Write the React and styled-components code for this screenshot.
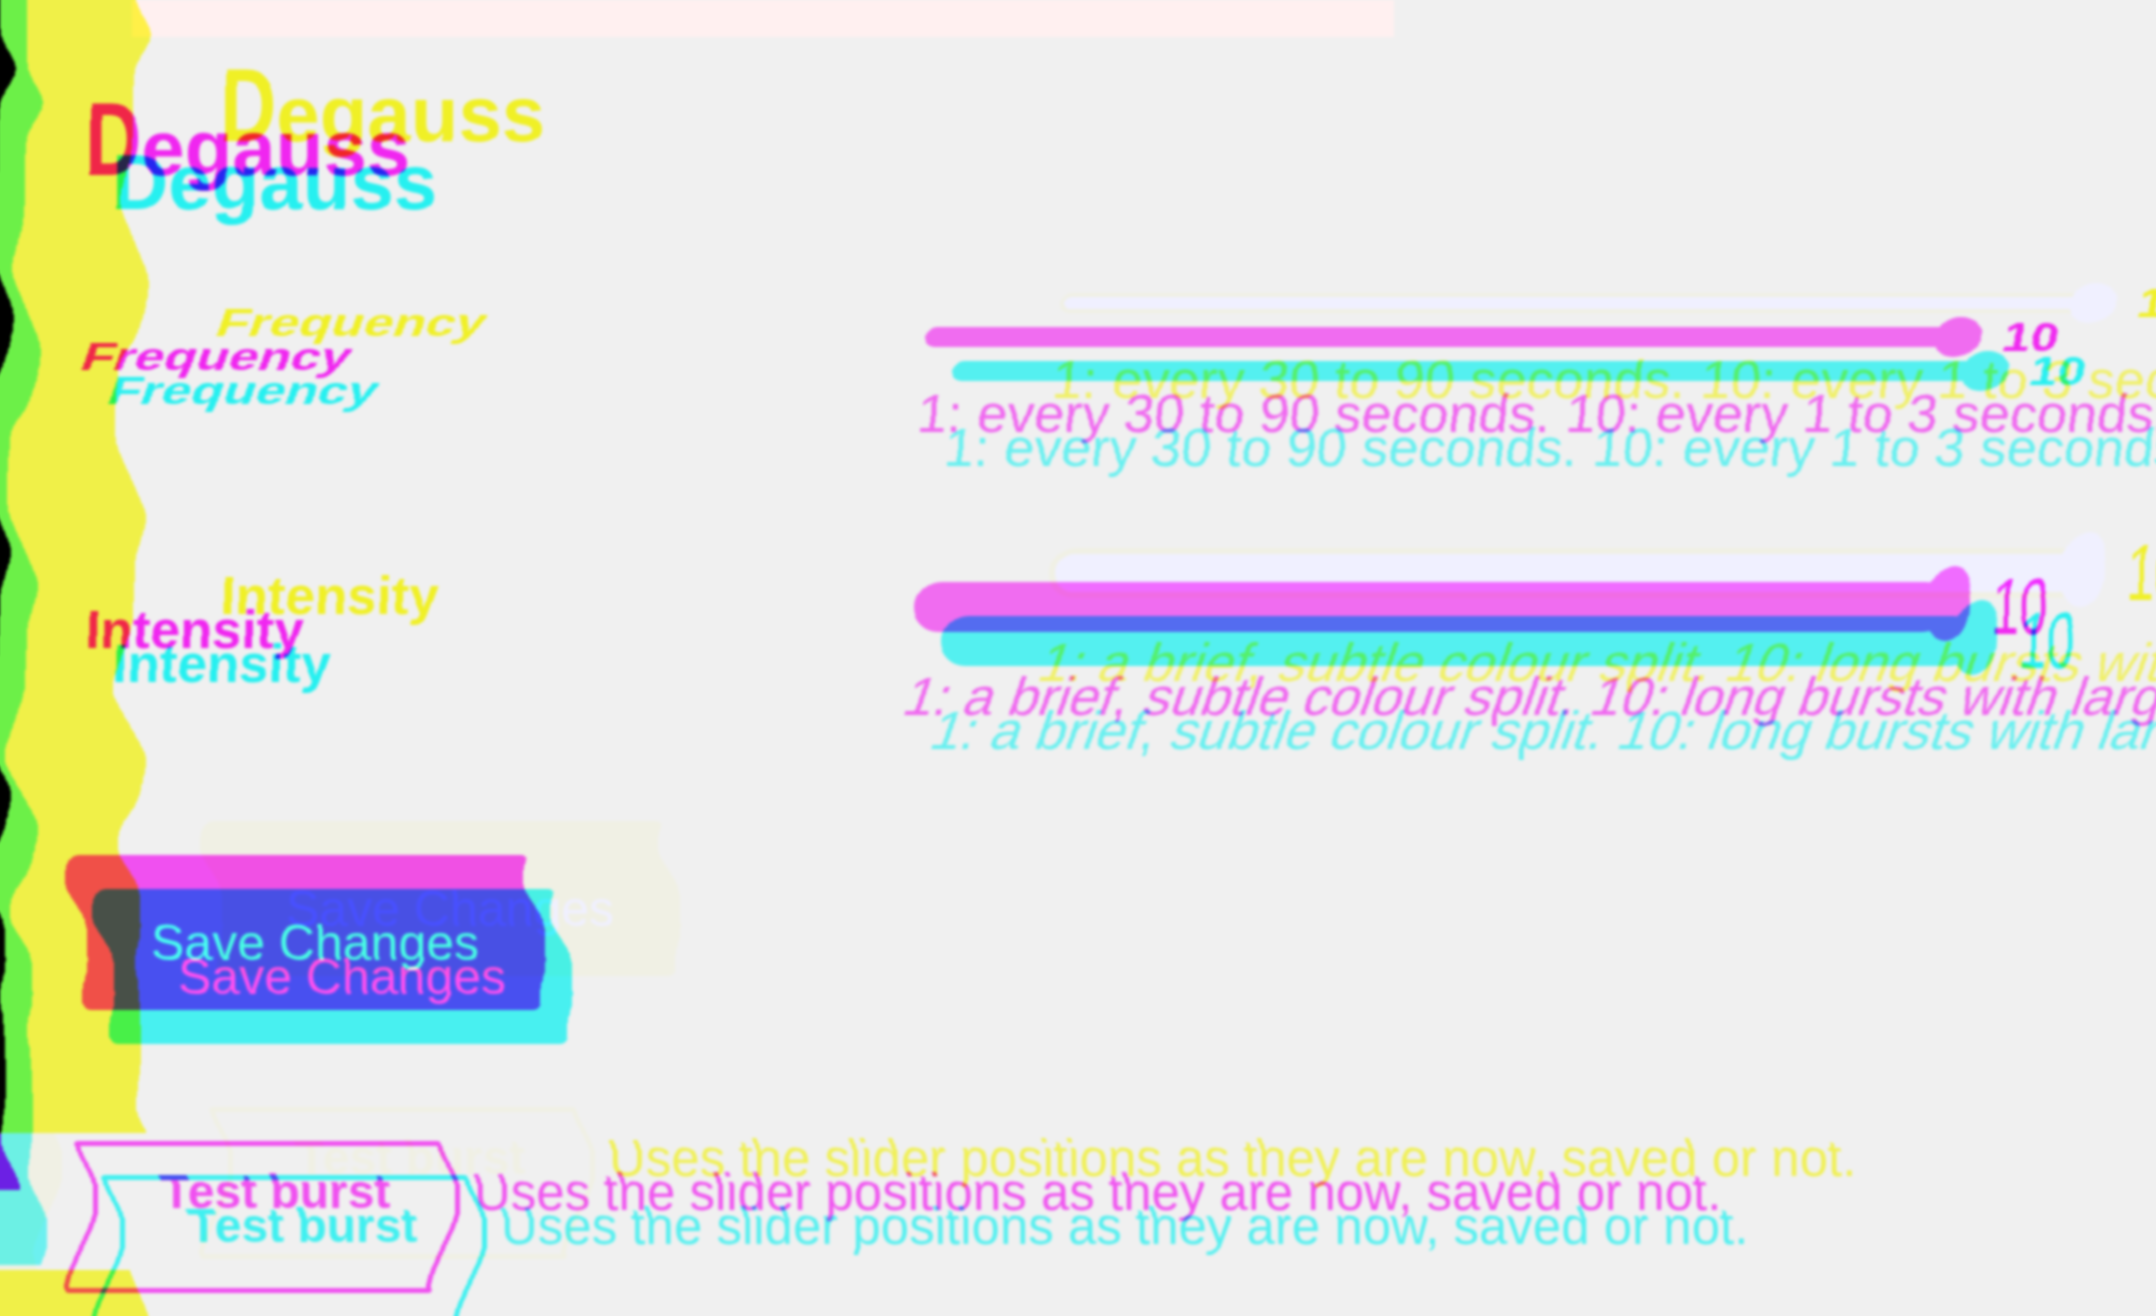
import React from "react";
import styled, { createGlobalStyle } from "styled-components";

const PAD_X = 300;
const PAD_Y = 100;
const LAYER_W = 2156 + PAD_X * 2;
const LAYER_H = 1316 + PAD_Y * 2;
const SCALE = 160;

const WAVE = [
  [-100, -8], [34, -8], [67, 11], [100, -9], [185, -11], [234, -25], [311, 7], [340, 3], [372, -8],
  [392, -24], [440, -28], [474, -28], [549, 5], [590, -8], [655, -10], [722, -33], [790, 5], [834, -5],
  [860, -24], [885, -26], [917, -4], [965, -2], [995, -10], [1010, -5], [1084, -1], [1143, -8],
  [1180, 12], [1215, 12], [1280, -18], [1304, -13], [1350, 7], [1420, 7],
];

const waveAt = (y) => {
  for (let i = 1; i < WAVE.length; i += 1) {
    if (y <= WAVE[i][0]) {
      const [y0, d0] = WAVE[i - 1];
      const [y1, d1] = WAVE[i];
      return d0 + ((d1 - d0) * (y - y0)) / (y1 - y0);
    }
  }
  return WAVE[WAVE.length - 1][1];
};

const BAND = 4;
const bands = [];
for (let y = 0; y < LAYER_H; y += BAND) {
  const d = waveAt(y - PAD_Y);
  const v = Math.round(255 * (0.5 - d / SCALE));
  bands.push({ y, v });
}

const CHANNELS = {
  red: "1 0 0 0 0  0 0 0 0 1  0 0 0 0 1  0 0 0 1 0",
  green: "0 1 0 0 0  0 1 0 0 0  0 1 0 0 0  0 0 0 1 0",
  blue: "0 0 0 0 1  0 0 0 0 1  0 0 1 0 0  0 0 0 1 0",
};

// In the green layer only a true zero turns red and blue off as well, which gives the black strip.
const BLACK_ONLY = "0 1 1 1 1 1 1 1 1 1 1 1 1 1 1 1";

const GlobalStyle = createGlobalStyle`
  html, body { margin: 0; padding: 0; background: #f0f0f0; overflow: hidden; }
  * { box-sizing: border-box; }
`;

const Stage = styled.div`
  position: relative;
  width: 2156px;
  height: 1316px;
  overflow: hidden;
  isolation: isolate;
  background: #fff;
  font-family: "Liberation Sans", Arial, sans-serif;
`;

const FilterDefs = styled.svg`
  position: absolute;
  width: 0;
  height: 0;
`;

const Layer = styled.div`
  position: absolute;
  left: ${-PAD_X}px;
  top: ${-PAD_Y}px;
  width: ${LAYER_W}px;
  height: ${LAYER_H}px;
  display: grid;
  grid-template-columns: ${PAD_X + 8}px 1fr;
  background: #f0f0f0;
  mix-blend-mode: multiply;
  filter: url(#${(p) => p.$channel});
  transform: translate(${(p) => p.$dx}px, ${(p) => p.$dy}px);
`;

const Sidebar = styled.aside`
  display: flex;
  flex-direction: column;
  align-items: flex-start;
`;

const SidebarPiece = styled.div`
  flex: ${(p) => (p.$h ? "none" : 1)};
  height: ${(p) => (p.$h ? `${p.$h}px` : "auto")};
  width: ${(p) => p.$w}px;
  background: ${(p) => p.$c};
`;

const Banner = styled.div`
  position: absolute;
  left: ${PAD_X + 113}px;
  top: ${PAD_Y - 34}px;
  width: 1262px;
  height: 37px;
  background: #fff0ee;
`;

const Main = styled.main`
  padding: ${PAD_Y + 109}px 0 0 77px;
  white-space: nowrap;
`;

const Title = styled.h1`
  margin: 0 0 0 10px;
  height: 78px;
  font-size: 78px;
  line-height: 1;
  font-weight: 700;
  color: #262626;
`;

const Initial = styled.span`
  display: inline-block;
  transform-origin: 50% 85%;
  transform: scaleY(${(p) => (p.$tall ? 1.34 : 1)});
`;

const Row = styled.section`
  display: grid;
  grid-template-columns: 837px 1fr;
  margin-top: ${(p) => p.$top}px;
`;

const Label = styled.div`
  padding: ${(p) => p.$pad}px 0 0 ${(p) => p.$nudge}px;
  font-size: 53px;
  line-height: 60px;
  font-weight: 700;
  color: #262626;
  transform-origin: 0 50%;
  transform: scaleY(${(p) => p.$squash});
`;

const SliderLine = styled.div`
  display: flex;
  align-items: center;
  height: 60px;
`;

const Track = styled.div`
  position: relative;
  width: 1034px;
  height: ${(p) => p.$h}px;
  border-radius: ${(p) => p.$h / 2}px;
  border: ${(p) => p.$border}px solid #546ce4;
  background: #546cff;
`;

const Thumb = styled.div`
  position: absolute;
  right: ${(p) => -p.$border - 22}px;
  top: 50%;
  width: 46px;
  height: ${(p) => p.$h}px;
  margin-top: ${(p) => -p.$h / 2 + (p.$shift || 0)}px;
  border-radius: 50%/46%;
  background: #546cff;
`;

const Value = styled.output`
  margin-left: 44px;
  font-size: 50px;
  line-height: 1;
  font-weight: ${(p) => p.$weight};
  color: #2a2a2a;
  transform: scaleY(${(p) => p.$stretch});
`;

const Hint = styled.p`
  margin: ${(p) => p.$top}px 0 0 ${(p) => p.$left}px;
  font-size: 54px;
  line-height: 60px;
  color: #686868;
`;

const SaveButton = styled.button`
  display: flex;
  align-items: center;
  width: 458px;
  height: 155px;
  margin: 129px 0 0 5px;
  padding: 20px 0 0 64px;
  border: 0;
  border-radius: 8px;
  background: #4850e4;
  color: #fff;
  font: 400 50px "Liberation Sans", Arial, sans-serif;
`;

const BurstRow = styled.div`
  display: flex;
  align-items: flex-start;
  gap: 14px;
  margin: 131px 0 0 -4px;
`;

const BurstButton = styled.button`
  display: flex;
  align-items: flex-start;
  flex: none;
  width: 367px;
  height: 152px;
  padding: 16px 0 0 64px;
  border: 5px solid #4050e4;
  border-radius: 4px;
  background: transparent;
  color: #4050e4;
  font: 700 48px/60px "Liberation Sans", Arial, sans-serif;
`;

const BurstNote = styled.span`
  margin-top: 26px;
  font-size: 51px;
  line-height: 1;
  color: #555;
`;

const SIDE = "#6c0048";
const SIDE_SOFT = "#6c2048";

const LAYERS = [
  {
    channel: "blue",
    dx: 135,
    dy: -34,
    tallD: true,
    pieces: [
      { h: 1267, w: PAD_X + 8, c: SIDE },
      { h: 137, w: 215, c: "#f0f0e4" },
      { w: PAD_X + 8, c: SIDE },
    ],
  },
  {
    channel: "green",
    dx: 0,
    dy: 0,
    tallD: true,
    pieces: [
      { h: 1233, w: PAD_X + 8, c: SIDE },
      { h: 57, w: PAD_X + 8, c: SIDE_SOFT },
    ],
  },
  {
    channel: "red",
    dx: 27,
    dy: 34,
    banner: true,
    pieces: [{ h: 1331, w: PAD_X + 8, c: SIDE }],
  },
];

function Page({ tallD, pieces, banner }) {
  return (
    <>
      <Sidebar>
        {pieces.map((p, i) => (
          <SidebarPiece key={i} $h={p.h} $w={p.w} $c={p.c} />
        ))}
      </Sidebar>
      {banner && <Banner />}
      <Main>
        <Title>
          <Initial $tall={tallD}>D</Initial>egauss
        </Title>
        <Row $top={120}>
          <Label $pad={13} $nudge={0} $squash={0.72}>Frequency</Label>
          <div>
            <SliderLine>
              <Track $h={20} $border={4}>
                <Thumb $h={40} $border={4} />
              </Track>
              <Value $weight={700} $stretch={0.8}>10</Value>
            </SliderLine>
            <Hint $top={16} $left={21}>1: every 30 to 90 seconds. 10: every 1 to 3 seconds.</Hint>
          </div>
        </Row>
        <Row $top={134}>
          <Label $pad={23} $nudge={10} $squash={1}>Intensity</Label>
          <div>
            <SliderLine>
              <Track $h={50} $border={6}>
                <Thumb $h={75} $border={6} $shift={-4} />
              </Track>
              <Value $weight={400} $stretch={1.6}>10</Value>
            </SliderLine>
            <Hint $top={29} $left={8}>1: a brief, subtle colour split. 10: long bursts with large jumps.</Hint>
          </div>
        </Row>
        <SaveButton>Save Changes</SaveButton>
        <BurstRow>
          <BurstButton>Test burst</BurstButton>
          <BurstNote>Uses the slider positions as they are now, saved or not.</BurstNote>
        </BurstRow>
      </Main>
    </>
  );
}

export default function App() {
  return (
    <Stage>
      <GlobalStyle />
      <FilterDefs aria-hidden="true">
        <defs>
          {Object.entries(CHANNELS).map(([name, matrix]) => (
            <filter
              key={name}
              id={name}
              filterUnits="userSpaceOnUse"
              primitiveUnits="userSpaceOnUse"
              x="0"
              y="0"
              width={LAYER_W}
              height={LAYER_H}
              colorInterpolationFilters="sRGB"
            >
              {bands.map((b, i) => (
                <feFlood
                  key={i}
                  x="0"
                  y={b.y}
                  width={LAYER_W}
                  height={BAND}
                  floodColor={`rgb(${b.v},128,128)`}
                  result={`b${i}`}
                />
              ))}
              <feMerge result="steps">
                {bands.map((b, i) => (
                  <feMergeNode key={i} in={`b${i}`} />
                ))}
              </feMerge>
              <feGaussianBlur in="steps" stdDeviation="0 7" result="map" />
              <feDisplacementMap in="SourceGraphic" in2="map" scale={SCALE} xChannelSelector="R" yChannelSelector="G" result="moved" />
              <feColorMatrix in="moved" type="matrix" values={matrix} result="split" />
              {name === "green" ? (
                <feComponentTransfer in="split" result="toned">
                  <feFuncR type="discrete" tableValues={BLACK_ONLY} />
                  <feFuncB type="discrete" tableValues={BLACK_ONLY} />
                </feComponentTransfer>
              ) : (
                <feOffset in="split" dx="0" dy="0" result="toned" />
              )}
              <feGaussianBlur in="toned" stdDeviation="1.6" />
            </filter>
          ))}
        </defs>
      </FilterDefs>
      {LAYERS.map((l) => (
        <Layer key={l.channel} $channel={l.channel} $dx={l.dx} $dy={l.dy}>
          <Page tallD={l.tallD} pieces={l.pieces} banner={l.banner} />
        </Layer>
      ))}
    </Stage>
  );
}
